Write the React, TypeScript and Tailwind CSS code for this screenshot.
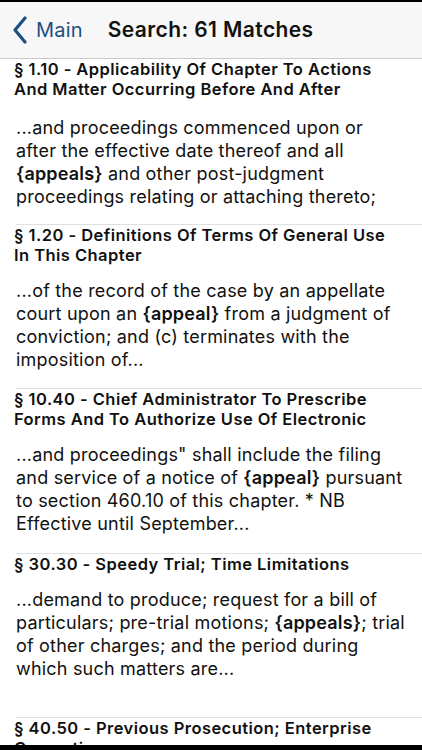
import React from "react";

type Match = { title: string[]; body: React.ReactNode[] };

const ap = (w: string) => <b className="font-semibold">{w}</b>;

const matches: Match[] = [
  {
    title: ["§ 1.10 - Applicability Of Chapter To Actions", "And Matter Occurring Before And After"],
    body: [
      "...and proceedings commenced upon or",
      "after the effective date thereof and all",
      <>{ap("{appeals}")} and other post-judgment</>,
      "proceedings relating or attaching thereto;",
    ],
  },
  {
    title: ["§ 1.20 - Definitions Of Terms Of General Use", "In This Chapter"],
    body: [
      "...of the record of the case by an appellate",
      <>court upon an {ap("{appeal}")} from a judgment of</>,
      "conviction; and (c) terminates with the",
      "imposition of...",
    ],
  },
  {
    title: ["§ 10.40 - Chief Administrator To Prescribe", "Forms And To Authorize Use Of Electronic"],
    body: [
      '...and proceedings" shall include the filing',
      <>and service of a notice of {ap("{appeal}")} pursuant</>,
      "to section 460.10 of this chapter. * NB",
      "Effective until September...",
    ],
  },
  {
    title: ["§ 30.30 - Speedy Trial; Time Limitations"],
    body: [
      "...demand to produce; request for a bill of",
      <>particulars; pre-trial motions; {ap("{appeals}")}; trial</>,
      "of other charges; and the period during",
      "which such matters are...",
    ],
  },
  {
    title: ["§ 40.50 - Previous Prosecution; Enterprise", "Corruption"],
    body: [],
  },
];

export default function App() {
  return (
    <div className="w-[422px] h-[750px] overflow-hidden bg-white flex flex-col text-[#111] font-['Inter','Liberation_Sans',sans-serif]">
      <div className="h-[2px] bg-black shrink-0" />
      <header className="h-[57px] shrink-0 bg-[#f7f7f7] border-b border-[#c9c9c9] flex items-center">
        <div className="flex items-center pl-[12px] text-[#1d4f80]">
          <svg width="16" height="28" viewBox="0 0 16 28" fill="none">
            <path d="M13 2 L3 14 L13 26" stroke="currentColor" strokeWidth="3.2" strokeLinecap="round" strokeLinejoin="round" />
          </svg>
          <span className="ml-[8px] text-[20px] tracking-[0.2px]">Main</span>
        </div>
        <h1 className="ml-[25px] text-[21px] font-semibold tracking-[0.4px]">Search: 61 Matches</h1>
      </header>
      <div className="flex-1 overflow-hidden">
        {matches.map((m, i) => (
          <div key={i} className={"h-[164.5px] " + (i > 0 ? "border-t border-[#e0e0e0] ml-[16px]" : "")}>
            <div className={i > 0 ? "-ml-[2px]" : "ml-[14px]"}>
              <div className="text-[16.5px] leading-[20px] font-semibold tracking-[0.45px] whitespace-nowrap">
                {m.title.map((t, j) => (
                  <div key={j}>{t}</div>
                ))}
              </div>
              <div className={(i === 0 ? "mt-[17px]" : "mt-[14px]") + " pl-[2px] text-[18px] leading-[23px] tracking-[0.2px] whitespace-nowrap"}>
                {m.body.map((t, j) => (
                  <div key={j}>{t}</div>
                ))}
              </div>
            </div>
          </div>
        ))}
      </div>
      <div className="h-[5px] bg-black shrink-0" />
    </div>
  );
}
